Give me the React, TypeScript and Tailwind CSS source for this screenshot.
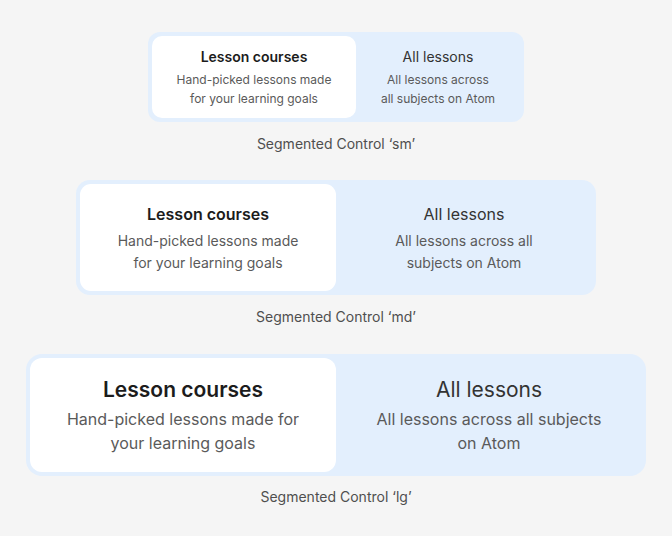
import React from "react";

type Size = "sm" | "md" | "lg";

const cfg = {
  sm: {
    wrap: "",
    outer: "rounded-[12px] p-[4px]",
    seg: "rounded-[10px] pt-[11px] pb-[10px]",
    title: "text-[14px] leading-[20px]",
    gap: "mt-[3px]",
    sub: "text-[12px] leading-[19px]",
    widths: ["w-[204px]", "w-[164px]"],
    cap: "mt-[12px]",
  },
  md: {
    wrap: "mt-[26px]",
    outer: "rounded-[14px] p-[4px]",
    seg: "rounded-[11px] pt-[18px] pb-[17px]",
    title: "text-[16px] leading-[24px]",
    gap: "mt-[4px]",
    sub: "text-[14px] leading-[22px]",
    widths: ["w-[256px]", "w-[256px]"],
    cap: "mt-[12px]",
  },
  lg: {
    wrap: "mt-[27px]",
    outer: "rounded-[16px] p-[4px]",
    seg: "rounded-[12px] pt-[17px] pb-[17px]",
    title: "text-[21px] leading-[29px]",
    gap: "mt-[3px]",
    sub: "text-[16px] leading-[24px]",
    widths: ["w-[306px]", "w-[306px]"],
    cap: "mt-[11px]",
  },
};

const lines: Record<Size, [string[], string[]]> = {
  sm: [
    ["Hand-picked lessons made", "for your learning goals"],
    ["All lessons across", "all subjects on Atom"],
  ],
  md: [
    ["Hand-picked lessons made", "for your learning goals"],
    ["All lessons across all", "subjects on Atom"],
  ],
  lg: [
    ["Hand-picked lessons made for", "your learning goals"],
    ["All lessons across all subjects", "on Atom"],
  ],
};

function Segmented({ size }: { size: Size }) {
  const c = cfg[size];
  const [l, r] = lines[size];
  return (
    <div className={`flex flex-col items-center ${c.wrap}`}>
      <div className={`flex bg-[#e3effd] ${c.outer}`}>
        <div className={`flex flex-col items-center bg-white ${c.seg} ${c.widths[0]}`}>
          <div className={`font-semibold text-[#1c1c1c] whitespace-nowrap ${c.title}`}>Lesson courses</div>
          <div className={`flex flex-col items-center text-[#5a5a5a] ${c.gap} ${c.sub}`}>
            {l.map((t) => (
              <span key={t} className="whitespace-nowrap">{t}</span>
            ))}
          </div>
        </div>
        <div className={`flex flex-col items-center ${c.seg} ${c.widths[1]}`}>
          <div className={`font-normal text-[#333333] whitespace-nowrap ${c.title}`}>All lessons</div>
          <div className={`flex flex-col items-center text-[#5a5a5a] ${c.gap} ${c.sub}`}>
            {r.map((t) => (
              <span key={t} className="whitespace-nowrap">{t}</span>
            ))}
          </div>
        </div>
      </div>
      <div className={`text-[14px] leading-[20px] text-[#4f4f4f] ${c.cap}`}>
        Segmented Control ‘{size}’
      </div>
    </div>
  );
}

export default function App() {
  return (
    <div
      className="w-[672px] h-[536px] bg-[#f5f5f5] flex flex-col items-center pt-[32px]"
      style={{ fontFamily: "Inter, 'Noto Sans', sans-serif" }}
    >
      <Segmented size="sm" />
      <Segmented size="md" />
      <Segmented size="lg" />
    </div>
  );
}
